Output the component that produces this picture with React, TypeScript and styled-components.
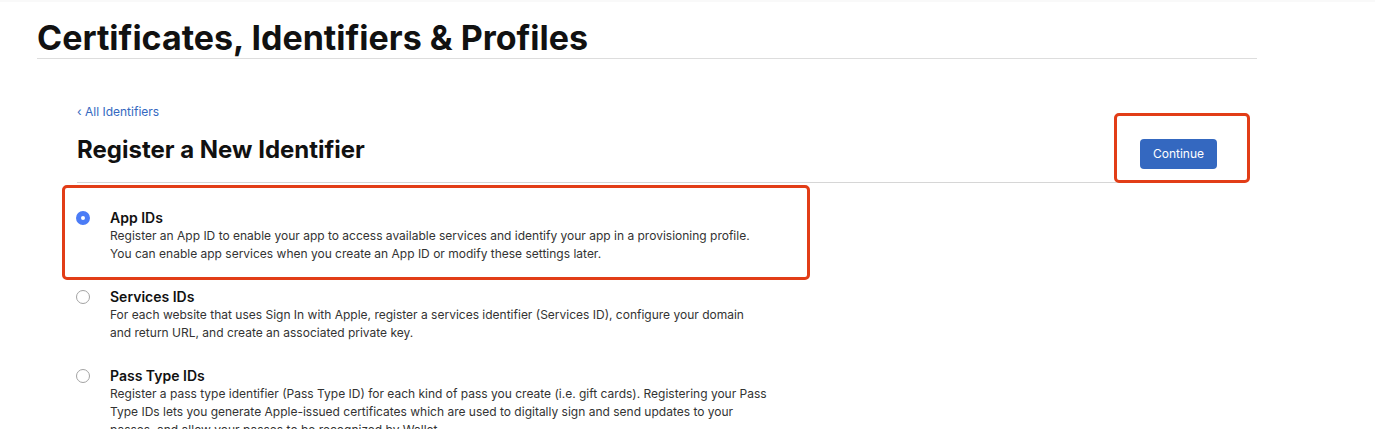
import React, { useState } from "react";
import styled, { createGlobalStyle } from "styled-components";

const GlobalStyle = createGlobalStyle`
  *, *::before, *::after { box-sizing: border-box; }
  body {
    margin: 0;
    background: #fff;
    color: #111;
    font-family: Inter, "Liberation Sans", sans-serif;
  }
`;

const Page = styled.div`
  height: 100vh;
  overflow: hidden;
  padding: 0 118px 0 37px;
  border-top: 2px solid #f9f9f9;
`;

const PageHeader = styled.header`
  padding-top: 16px;
  border-bottom: 1px solid #ddd;
`;

const PageTitle = styled.h1`
  margin: 0;
  font-size: 34px;
  line-height: 40px;
  font-weight: 700;
`;

const Main = styled.main`
  padding: 44px 40px 0;
`;

const BackLink = styled.a`
  display: block;
  width: max-content;
  font-size: 12px;
  line-height: 18px;
  color: #3468c0;
  text-decoration: none;
`;

const Toolbar = styled.div`
  display: flex;
  justify-content: space-between;
  align-items: flex-start;
  height: 62px;
  border-bottom: 1px solid #d6d6d6;
`;

const SectionTitle = styled.h2`
  margin: 0;
  padding-top: 14px;
  font-size: 24px;
  line-height: 30px;
  font-weight: 700;
`;

const ButtonSpot = styled.div`
  position: relative;
  padding-top: 18px;
`;

const ContinueButton = styled.button`
  display: block;
  height: 30px;
  padding: 0 13px;
  border: 0;
  border-radius: 4px;
  background: #3468c0;
  color: #fff;
  font-family: inherit;
  font-size: 12px;
  line-height: 18px;
`;

const Marker = styled.div<{ $inset: string }>`
  position: absolute;
  inset: ${(p) => p.$inset};
  border: 3px solid #e23d17;
  border-radius: 5px;
  pointer-events: none;
`;

const Options = styled.div`
  display: flex;
  flex-direction: column;
  gap: 24px;
  max-width: 690px;
  padding-top: 25px;
`;

const Option = styled.div`
  position: relative;
  display: flex;
  gap: 20px;
`;

const Radio = styled.input`
  appearance: none;
  flex: none;
  width: 14px;
  height: 14px;
  margin: 3px 0 0 -1px;
  border: 1px solid #a3a3a3;
  border-radius: 50%;
  background: #fff;

  &:checked {
    border: 5px solid #4b7cf6;
  }
`;

const OptionText = styled.div`
  font-size: 12px;
  line-height: 18px;
  color: #333;
`;

const OptionName = styled.label`
  display: block;
  font-size: 14px;
  line-height: 19px;
  font-weight: 600;
  color: #111;
`;

const Line = styled.span`
  display: block;
  white-space: nowrap;
`;

const identifiers = [
  {
    id: "app",
    name: "App IDs",
    lines: [
      "Register an App ID to enable your app to access available services and identify your app in a provisioning profile.",
      "You can enable app services when you create an App ID or modify these settings later.",
    ],
  },
  {
    id: "services",
    name: "Services IDs",
    lines: [
      "For each website that uses Sign In with Apple, register a services identifier (Services ID), configure your domain",
      "and return URL, and create an associated private key.",
    ],
  },
  {
    id: "pass",
    name: "Pass Type IDs",
    lines: [
      "Register a pass type identifier (Pass Type ID) for each kind of pass you create (i.e. gift cards). Registering your Pass",
      "Type IDs lets you generate Apple-issued certificates which are used to digitally sign and send updates to your",
      "passes, and allow your passes to be recognized by Wallet.",
    ],
  },
];

export default function App() {
  const [selected, setSelected] = useState("app");
  return (
    <>
      <GlobalStyle />
      <Page>
        <PageHeader>
          <PageTitle>Certificates, Identifiers &amp; Profiles</PageTitle>
        </PageHeader>
        <Main>
          <BackLink href="#identifiers">‹ All Identifiers</BackLink>
          <Toolbar>
            <SectionTitle>Register a New Identifier</SectionTitle>
            <ButtonSpot>
              <ContinueButton type="button">Continue</ContinueButton>
              <Marker $inset="-8px -33px -14px -26px" />
            </ButtonSpot>
          </Toolbar>
          <Options role="radiogroup" aria-label="Identifier type">
            {identifiers.map((item) => (
              <Option key={item.id}>
                <Radio
                  type="radio"
                  name="identifier"
                  id={item.id}
                  checked={selected === item.id}
                  onChange={() => setSelected(item.id)}
                />
                <OptionText>
                  <OptionName htmlFor={item.id}>{item.name}</OptionName>
                  {item.lines.map((line) => (
                    <Line key={line}>{line}</Line>
                  ))}
                </OptionText>
                {item.id === "app" && <Marker $inset="-23px -43px -17px -15px" />}
              </Option>
            ))}
          </Options>
        </Main>
      </Page>
    </>
  );
}
